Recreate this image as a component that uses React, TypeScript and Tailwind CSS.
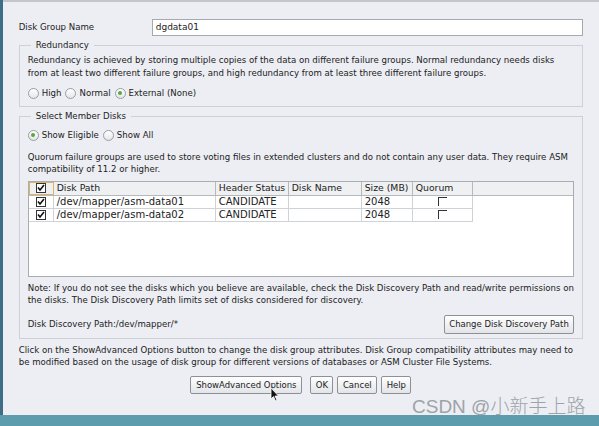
import React from "react";

const font = { fontFamily: '"DejaVu Sans", Verdana, sans-serif' };

function Radio({ checked, label }: { checked?: boolean; label: string }) {
  return (
    <label className="flex items-center gap-[3px]">
      <span className="flex h-[11px] w-[11px] items-center justify-center rounded-full border border-[#9a9ea4] bg-gradient-to-b from-white to-[#e3e6ea]">
        {checked && <span className="h-[4px] w-[4px] rounded-full bg-[#5aa83a]" />}
      </span>
      <span>{label}</span>
    </label>
  );
}

function Check({ checked = true }: { checked?: boolean }) {
  return (
    <span className="flex h-[10px] w-[10px] items-center justify-center border border-[#333] bg-white">
      {checked && (
        <svg width="8" height="8" viewBox="0 0 8 8">
          <path d="M1 3.5 L3 6 L7 1" stroke="#111" strokeWidth="1.6" fill="none" />
        </svg>
      )}
    </span>
  );
}

function QuorumBox() {
  return <span className="block h-[9px] w-[9px] border-l-[1.5px] border-t-[1.5px] border-[#333]" />;
}

function Btn({ children, className = "" }: { children: React.ReactNode; className?: string }) {
  return (
    <button
      type="button"
      className={`flex h-[18px] items-center justify-center whitespace-nowrap rounded-[2px] border border-[#8d9196] bg-gradient-to-b from-white to-[#e2e4e8] text-[8.5px] text-[#222] ${className}`}
    >
      {children}
    </button>
  );
}

const cols = ["w-[25px]", "w-[162px]", "w-[73px]", "w-[73px]", "w-[51px]", "w-[60px]"];

const rows = ["/dev/mapper/asm-data01", "/dev/mapper/asm-data02"];

export default function App() {
  return (
    <div className="relative flex h-[426px] w-[599px] flex-col overflow-hidden bg-[#5d9cad] text-[8.6px] text-[#222]" style={font}>
      <div className="flex h-[415px]">
        <div className="w-[3px] bg-[#3e6e86]" />
        <div className="flex flex-1 flex-col border-t-2 border-[#c3c6cc] bg-[#eceef3] pl-[16px] pr-[16px] pt-[17px]">
          <div className="flex h-[17px] items-center">
            <span className="w-[133px]">Disk Group Name</span>
            <div className="flex h-[17px] flex-1 items-center border border-[#a6a9ae] bg-white pl-[3px] text-[9px]">dgdata01</div>
          </div>

          <fieldset className="mt-[3px] h-[68px] border border-[#cdd0d6] px-[8px]">
            <legend className="ml-[3px] px-[5px]">Redundancy</legend>
            <div className="mt-[2px] whitespace-nowrap leading-[13px]">
              Redundancy is achieved by storing multiple copies of the data on different failure groups. Normal redundancy needs disks
              <br />
              from at least two different failure groups, and high redundancy from at least three different failure groups.
            </div>
            <div className="mt-[7px] flex items-center gap-[4px]">
              <Radio label="High" />
              <Radio label="Normal" />
              <Radio label="External (None)" checked />
            </div>
          </fieldset>

          <fieldset className="mt-[3px] h-[229px] border border-[#cdd0d6] pl-[8px] pr-[8px]">
            <legend className="ml-[3px] px-[5px]">Select Member Disks</legend>
            <div className="mt-[6px] flex items-center gap-[4px]">
              <Radio label="Show Eligible" checked />
              <Radio label="Show All" />
            </div>
            <div className="mt-[9px] whitespace-nowrap leading-[12px]">
              Quorum failure groups are used to store voting files in extended clusters and do not contain any user data. They require ASM
              <br />
              compatibility of 11.2 or higher.
            </div>

            <div className="mt-[6px] h-[96px] border border-[#a9acb1] bg-white text-[10px]">
              <div className="flex h-[14px] border-b border-[#b5b8bd] bg-[#eef0f2] text-[9.3px]">
                <div className={`${cols[0]} flex items-center justify-center border border-[#d9b36a]`}>
                  <Check />
                </div>
                {["Disk Path", "Header Status", "Disk Name", "Size (MB)", "Quorum"].map((h, i) => (
                  <div key={h} className={`${cols[i + 1]} flex items-center overflow-hidden whitespace-nowrap border-r border-[#b5b8bd] pl-[3px]`}>
                    {h}
                  </div>
                ))}
              </div>
              {rows.map((r) => (
                <div key={r} className="flex h-[13px]">
                  <div className={`${cols[0]} flex items-center justify-center border-b border-r border-[#cfd2d6]`}>
                    <Check />
                  </div>
                  <div className={`${cols[1]} flex items-center border-b border-r border-[#cfd2d6] pl-[3px]`}>{r}</div>
                  <div className={`${cols[2]} flex items-center border-b border-r border-[#cfd2d6] pl-[3px]`}>CANDIDATE</div>
                  <div className={`${cols[3]} border-b border-r border-[#cfd2d6]`} />
                  <div className={`${cols[4]} flex items-center border-b border-r border-[#cfd2d6] pl-[3px]`}>2048</div>
                  <div className={`${cols[5]} flex items-center justify-center border-b border-r border-[#cfd2d6]`}>
                    <QuorumBox />
                  </div>
                </div>
              ))}
            </div>

            <div className="mt-[5px] whitespace-nowrap leading-[12px]">
              Note: If you do not see the disks which you believe are available, check the Disk Discovery Path and read/write permissions on
              <br />
              the disks. The Disk Discovery Path limits set of disks considered for discovery.
            </div>
            <div className="mt-[9px] flex items-center justify-between">
              <span>Disk Discovery Path:/dev/mapper/*</span>
              <Btn className="h-[19px] w-[130px]">Change Disk Discovery Path</Btn>
            </div>
          </fieldset>

          <div className="mt-[5px] whitespace-nowrap leading-[12px]">
            Click on the ShowAdvanced Options button to change the disk group attributes. Disk Group compatibility attributes may need to
            <br />
            be modified based on the usage of disk group for different versions of databases or ASM Cluster File Systems.
          </div>
          <div className="mt-[8px] flex justify-center gap-[4px]">
            <Btn className="w-[112px]">ShowAdvanced Options</Btn>
            <Btn className="ml-[4px] w-[23px]">OK</Btn>
            <Btn className="w-[40px]">Cancel</Btn>
            <Btn className="w-[30px]">Help</Btn>
          </div>
        </div>
      </div>

      <svg className="absolute left-[270px] top-[387px]" width="10" height="15" viewBox="0 0 10 15">
        <path d="M1 1 L1 12 L3.5 9.5 L5.5 14 L7 13.3 L5 9 L8.5 9 Z" fill="#111" stroke="#fff" strokeWidth="0.8" />
      </svg>

      <div
        className="absolute left-[412px] top-[396px] text-[19px] leading-[22px] text-[#9ea3a8]"
        style={{ fontFamily: '"Liberation Sans", "Noto Sans CJK SC", sans-serif', fontWeight: 300 }}
      >
        CSDN @小新手上路
      </div>
    </div>
  );
}
